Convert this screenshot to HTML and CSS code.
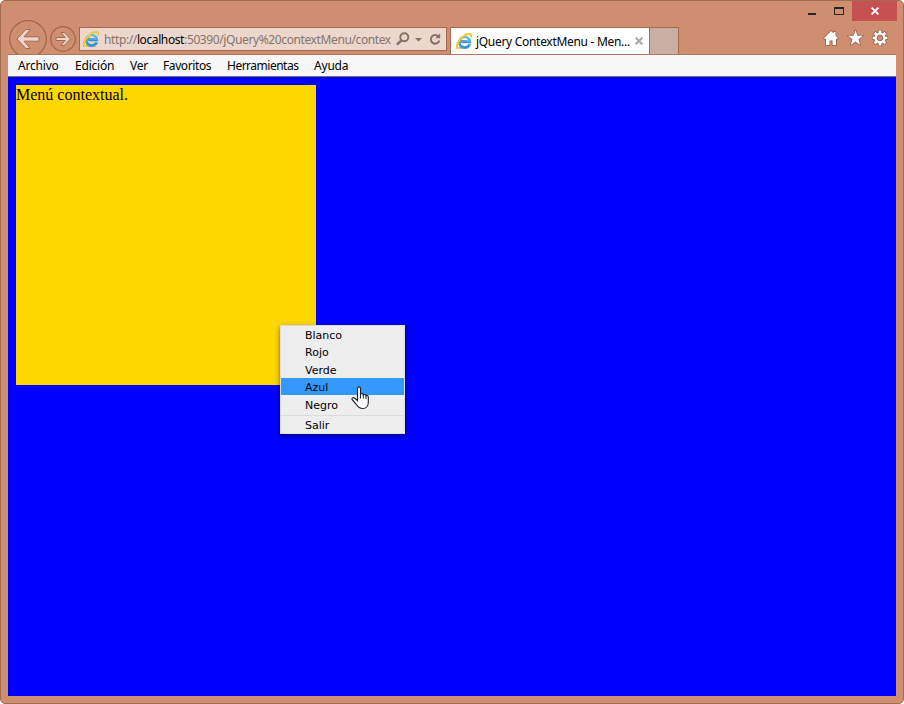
FILE: index.html
```html
<!DOCTYPE html>
<html lang="es">
<head>
<meta charset="utf-8">
<title>jQuery ContextMenu - Menú contextual</title>
<link rel="stylesheet" href="styles.css">
</head>
<body>
<svg class="defs" width="0" height="0">
  <defs>
    <linearGradient id="blue" gradientUnits="userSpaceOnUse" x1="0" y1="2" x2="0" y2="15"><stop offset="0" stop-color="#6cc8f0"/><stop offset="1" stop-color="#2b8fd2"/></linearGradient>
    <symbol id="ie" viewBox="0 0 16 16">
      <path d="M13.5 11.2A5.3 5.3 0 1 1 13.9 8.8H4.6" fill="none" stroke="url(#blue)" stroke-width="2.5"/>
      <path d="M15 11.2A6.8 6.8 0 0 1 3.2 13.6M15 9.8H6.3M4.6 7.6H11.2" fill="none" stroke="#2678b4" stroke-width=".6"/>
      <path d="M4.2 14.7C1.8 16 .4 15.2.9 12.6C1.7 8.5 6.3 3.1 11 1.2C13.8.1 15.6.8 14.8 3.9" fill="none" stroke="#d9a514" stroke-width="1.9"/>
      <path d="M4.2 14.7C1.8 16 .4 15.2.9 12.6C1.7 8.5 6.3 3.1 11 1.2C13.8.1 15.6.8 14.8 3.9" fill="none" stroke="#ffd83b" stroke-width="1.3"/>
    </symbol>
  </defs>
</svg>
<div class="window">
  <header class="titlebar">
    <svg class="minmax" width="44" height="20" viewBox="0 0 44 20">
      <path d="M0 12h8v2H0z" fill="#262626"/>
      <path d="M26 6h10v8H26z" fill="#262626"/><path d="M27 8h8v5h-8z" fill="#d08e70"/>
    </svg>
    <div class="close"><svg width="8" height="8" viewBox="0 0 8 8"><path d="M.6.6l6.8 6.8M7.4.6L.6 7.4" stroke="#fff" stroke-width="1.8"/></svg></div>
  </header>
  <nav class="navbar">
    <svg class="back" width="38" height="38" viewBox="0 0 38 38">
      <circle cx="19" cy="19" r="18.3" fill="#d08e70" stroke="#9c664d" stroke-width="1.2"/>
      <path d="M8 19l8.8-9.5h4.5L15.1 16.8H30v4.4H15.1l6.2 7.3h-4.5z" fill="#edd5ca" stroke="#a16a51"/>
    </svg>
    <svg class="forward" width="26" height="26" viewBox="0 0 26 26">
      <circle cx="13" cy="13" r="12.3" fill="#d08e70" stroke="#9c664d" stroke-width="1.2"/>
      <path d="M20.3 13l-6 6.5H11l4.2-5H6v-3h9.2L11 6.5h3.3z" fill="#edd5ca" stroke="#a16a51"/>
    </svg>
    <div class="address">
      <svg class="site" width="16" height="16"><use href="#ie"/></svg>
      <span class="url">http://<b>localhost</b>:50390/jQuery%20contextMenu/contex</span>
      <svg class="tools" width="46" height="16" viewBox="0 0 46 16">
        <circle cx="9.3" cy="6.3" r="4" fill="none" stroke="#85716a" stroke-width="2"/>
        <path d="M6.4 9.3L1.9 13.6" stroke="#85716a" stroke-width="2.5"/>
        <path d="M20 7h7l-3.5 3.5z" fill="#85716a"/>
        <path d="M43.2 5.3A4.3 4.3 0 1 0 44.3 9.4" fill="none" stroke="#85716a" stroke-width="2"/>
        <path d="M40.2 7.2h5V2.2z" fill="#85716a"/>
      </svg>
    </div>
    <div class="tab">
      <svg width="16" height="16"><use href="#ie"/></svg>
      <span class="tab-title">jQuery ContextMenu - Men...</span>
      <svg class="tab-close" width="8" height="8" viewBox="0 0 8 8"><path d="M.6.6l6.8 6.8M7.4.6L.6 7.4" stroke="#a9a9a9" stroke-width="2"/></svg>
    </div>
    <div class="newtab"></div>
    <svg class="actions" width="66" height="18" viewBox="0 0 66 18">
      <g fill="#fff" stroke="#8f614d" stroke-width="1.6" stroke-linejoin="round" paint-order="stroke">
        <path d="M1 9.2L8 2l2.5 2.5V3h2v3.5L15 9.2l-.9 1L13 9.2V16H9.6v-4.5H6.5V16H3V9.2l-1.1 1z"/>
        <path d="M32.5 1.2l1.9 5.5h5.7l-4.6 3.5 1.7 5.7-4.7-3.4-4.7 3.4 1.7-5.7-4.6-3.5h5.7z"/>
      </g>
      <g transform="translate(57 9)">
        <g stroke="#8f614d" stroke-width="4.1"><path d="M0-8V8M-8 0H8M-5.8-5.8L5.8 5.8M5.8-5.8L-5.8 5.8"/></g>
        <circle r="6" fill="#8f614d"/>
        <g stroke="#fff" stroke-width="2.7"><path d="M0-7.4V7.4M-7.4 0H7.4M-5.3-5.3L5.3 5.3M5.3-5.3L-5.3 5.3"/></g>
        <circle r="5.4" fill="#fff"/>
        <circle r="2.8" fill="#d08e70" stroke="#8f614d" stroke-width=".9"/>
      </g>
    </svg>
  </nav>
  <div class="client">
    <div class="menubar">
      <span class="m1">Archivo</span><span class="m2">Edición</span><span class="m3">Ver</span><span class="m4">Favoritos</span><span class="m5">Herramientas</span><span class="m6">Ayuda</span>
    </div>
    <main class="page">
      <div class="box">Menú contextual.</div>
    </main>
  </div>
</div>
<ul class="context">
  <li>Blanco</li>
  <li>Rojo</li>
  <li>Verde</li>
  <li class="hover">Azul</li>
  <li class="last">Negro</li>
  <li class="sep">Salir</li>
</ul>
<svg class="cursor" width="19" height="24" viewBox="0 0 19 24">
  <path d="M6.5 14.5V2.7c0-2.4 3-2.4 3 0v5.5c.5-1 2.6-.8 2.8.6.7-.7 2.4-.4 2.6.9.9-.6 2.4-.2 2.4 1.5v5c0 3.5-2 6.3-5.5 6.3-3.3 0-4.8-1.3-6.2-3.7L1.2 13.7c-.8-1.6 1-2.7 2.5-1.5z" fill="#fff" stroke="#19202e" stroke-width="1.1"/>
  <path d="M9.5 8v4.5M12.3 9v3.5M15 10v3" fill="none" stroke="#19202e"/>
</svg>
</body>
</html>
```
FILE: styles.css
```css
* { box-sizing: border-box; }
body { margin: 0; width: 904px; height: 704px; overflow: hidden; background: #fff; font-family: "Noto Sans", sans-serif; font-size: 12px; color: #000; }
svg { display: block; flex: none; }
.defs { position: absolute; }
.window { width: 904px; height: 704px; display: flex; flex-direction: column; padding: 0 7px 7px; background: #d08e70; border: 1px solid #a16a51; border-radius: 5px; }
.titlebar { height: 19px; display: flex; justify-content: flex-end; align-items: flex-start; margin-right: -1px; }
.close { width: 45px; height: 20px; flex: none; display: flex; align-items: center; justify-content: center; background: #c75050; }
.navbar { height: 34px; display: flex; align-items: flex-start; overflow: hidden; padding-left: 1px; }
.forward { margin: 6px 3px 0 3px; }
.address { width: 368px; height: 24px; margin-top: 7px; padding: 0 5px 0 3px; display: flex; align-items: center; background: #edd6cc; border: 1px solid #a16a51; }
.url { width: 288px; margin-left: 5px; white-space: nowrap; color: #85746c; letter-spacing: -.39px; }
.url b { font-weight: 400; color: #000; }
.tools { margin-left: 4px; }
.tab { width: 200px; height: 27px; margin: 7px 0 0 3px; padding-left: 5px; display: flex; align-items: center; background: #fff; border: 1px solid #a16a51; border-bottom: 0; }
.tab-title { width: 155px; margin: 0 4px 0 4px; white-space: nowrap; letter-spacing: -.3px; }
.newtab { width: 29px; height: 27px; margin-top: 7px; background: #caaea3; border: 1px solid #a16a51; border-width: 1px 1px 0 0; }
.actions { margin: 9px 0 0 144px; }
.client { flex: 1; display: flex; flex-direction: column; border-top: 1px solid #b3765c; }
.menubar { height: 22px; display: flex; align-items: center; padding-left: 10px; background: #f7f7f7; border-bottom: 1px solid #707070; }
.menubar span { margin-right: 16px; white-space: nowrap; letter-spacing: -.2px; }
.m1 { width: 41px; }
.m2 { width: 39px; }
.m3 { width: 17px; }
.menubar .m4 { width: 48px; letter-spacing: -.4px; }
.menubar .m5 { width: 71px; letter-spacing: -.5px; }
.m6 { width: 34px; }
.page { flex: 1; padding: 8px; background: #00f; }
.box { width: 300px; height: 300px; background: gold; font: 16px/20px "Liberation Serif", serif; }
.context { position: absolute; left: 280px; top: 325px; width: 125px; height: 109px; margin: 0; padding: 0; list-style: none; background: #eee; border: 1px solid #ddd; box-shadow: 0 2px 5px rgba(0,0,0,.5); font: 11px/19px "DejaVu Sans", sans-serif; }
.context li { height: 17.3px; padding-left: 24px; }
.context .hover { background: #39f; }
.context .last { line-height: 21px; }
.context .sep { height: 18px; margin-top: 2.5px; border-top: 1px solid #ddd; line-height: 20px; }
.cursor { position: absolute; left: 351px; top: 386px; }
```
